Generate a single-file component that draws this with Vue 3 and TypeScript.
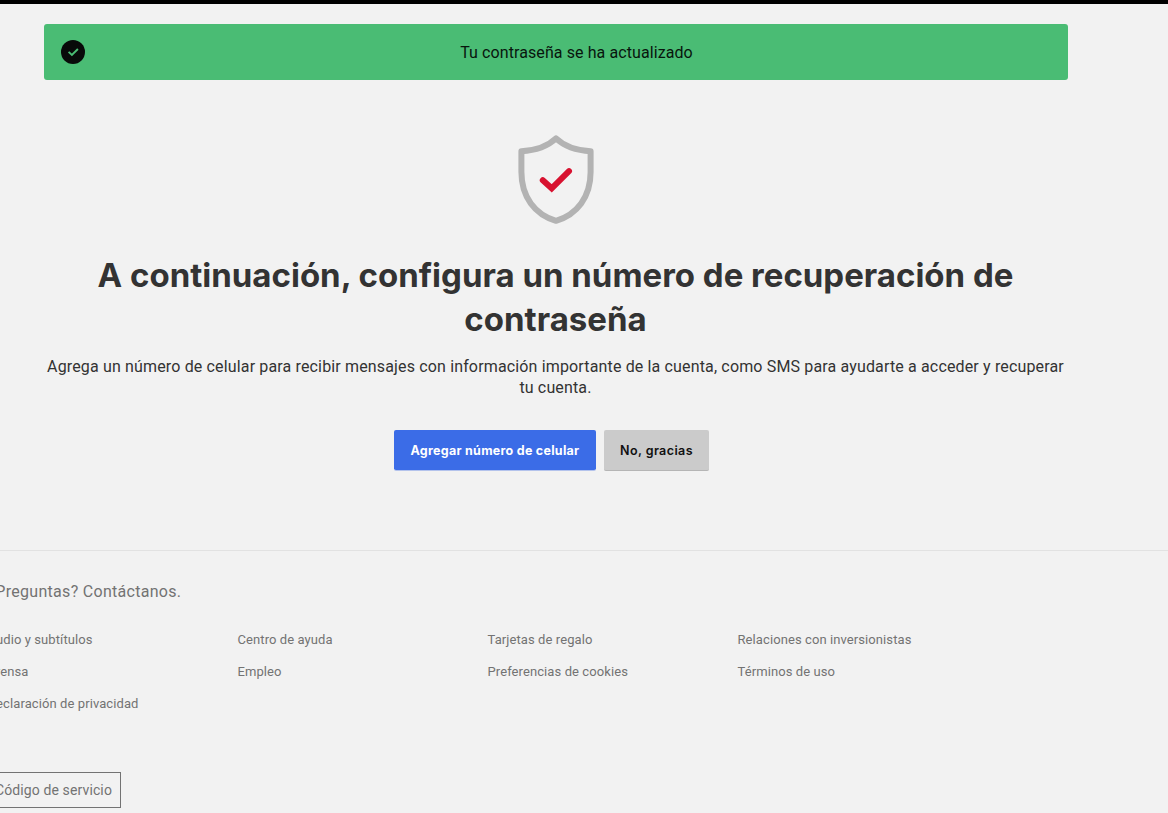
<script setup lang="ts">
interface FooterLink {
  label: string
}

const links: FooterLink[] = [
  { label: 'Audio y subtítulos' },
  { label: 'Centro de ayuda' },
  { label: 'Tarjetas de regalo' },
  { label: 'Relaciones con inversionistas' },
  { label: 'Prensa' },
  { label: 'Empleo' },
  { label: 'Preferencias de cookies' },
  { label: 'Términos de uso' },
  { label: 'Declaración de privacidad' },
]
</script>

<template>
  <div class="page">
    <main class="content">
      <div class="alert" role="status">
        <svg class="alert-icon" viewBox="0 0 24 24" aria-hidden="true">
          <circle cx="12" cy="12" r="12" fill="#080a09" />
          <path d="M7.600 11.900l3.300 3.100 6-6" fill="none" stroke="#4abc74" stroke-width="1.900" />
        </svg>
        <p class="alert-text">Tu contraseña se ha actualizado</p>
      </div>

      <section class="recovery">
        <svg class="shield" viewBox="0 0 76 90" aria-hidden="true">
          <path
            d="M38 3.400C30.500 10.500 18.500 15.500 3.400 16.200V37C3.400 62 17 79.500 38 85.800C59 79.500 72.600 62 72.600 37V16.200C57.500 15.500 45.500 10.500 38 3.400Z"
            fill="none" stroke="#b3b3b3" stroke-width="6" stroke-linejoin="round"
          />
          <path
            d="M24.800 45.200L33.700 53.300L51 36.200"
            fill="none" stroke="#d81230" stroke-width="6" stroke-linecap="round"
          />
        </svg>
        <h1>A continuación, configura un número de recuperación de<br />contraseña</h1>
        <p class="lead">
          Agrega un número de celular para recibir mensajes con información importante de la cuenta, como SMS para ayudarte a acceder y recuperar<br />tu cuenta.
        </p>
        <div class="actions">
          <button class="btn primary" type="button">Agregar número de celular</button>
          <button class="btn secondary" type="button">No, gracias</button>
        </div>
      </section>
    </main>

    <footer class="footer">
      <div class="footer-inner">
        <p class="contact">¿Preguntas? Contáctanos.</p>
        <ul class="links">
          <li v-for="link in links" :key="link.label">{{ link.label }}</li>
        </ul>
        <button class="service" type="button">Código de servicio</button>
      </div>
    </footer>
  </div>
</template>

<style>
body {
  background: #f2f2f2;
  overflow: hidden;
}
</style>

<style scoped>
.page {
  box-sizing: border-box;
  height: 813px;
  overflow: hidden;
  border-top: 4px solid #000;
  background: #f2f2f2;
  color: #333;
  font-family: Roboto, "Liberation Sans", sans-serif;
}
.content {
  box-sizing: border-box;
  width: 1024px;
  height: 546px;
  margin-left: 44px;
  padding-top: 20px;
}
.alert {
  box-sizing: border-box;
  display: flex;
  align-items: center;
  height: 56px;
  padding: 0 16px 0 17px;
  border-radius: 3px;
  background: #4abc74;
  color: #08150d;
}
.alert-icon {
  width: 24px;
  height: 24px;
  flex: none;
}
.alert-text {
  flex: 1;
  margin: 0;
  padding: 2px 0 0 16px;
  text-align: center;
  font-size: 16px;
  line-height: 24px;
  letter-spacing: 0.09px;
}
.recovery {
  display: flex;
  flex-direction: column;
  align-items: center;
  padding: 55px 1px 0 0;
}
.shield {
  width: 76px;
  height: 90px;
}
h1 {
  margin: 28px 0 0;
  font-family: Inter, Roboto, sans-serif;
  font-size: 33px;
  font-weight: 700;
  line-height: 44px;
  text-align: center;
  white-space: nowrap;
}
.lead {
  margin: 15px 0 0;
  font-size: 16px;
  line-height: 21px;
  letter-spacing: 0.15px;
  text-align: center;
  white-space: nowrap;
}
.actions {
  display: flex;
  gap: 8px;
  margin: 32px 8px 0 0;
}
.btn {
  box-sizing: border-box;
  height: 41px;
  padding: 0;
  border: 0;
  border-bottom: 1px solid #b5b5b5;
  border-radius: 2px;
  font-family: Inter, Roboto, sans-serif;
  font-size: 12.5px;
  font-weight: 700;
  letter-spacing: 0.27px;
  white-space: nowrap;
}
.primary {
  width: 202px;
  border-bottom-color: #b4c3ec;
  background: #3b6ce7;
  background-clip: padding-box;
  color: #fff;
}
.secondary {
  width: 105px;
  background: #cbcbcb;
  color: #111;
  font-weight: 600;
  letter-spacing: 0.4px;
}
.footer {
  border-top: 1px solid #e2e2e2;
  color: #737373;
}
.footer-inner {
  width: 1000px;
  margin-left: -12.5px;
  padding-top: 30px;
}
.contact {
  margin: 0;
  font-size: 16px;
  line-height: 21px;
  letter-spacing: 0.29px;
}
.links {
  display: grid;
  grid-template-columns: repeat(4, 250px);
  grid-auto-rows: 32px;
  margin: 22px 0 0;
  padding: 0;
  list-style: none;
  font-size: 13px;
  line-height: 32px;
  letter-spacing: 0.09px;
  white-space: nowrap;
}
.service {
  box-sizing: border-box;
  display: block;
  width: 133.5px;
  height: 36px;
  margin: 52px 0 0;
  padding: 0 8px 0 0;
  border: 1px solid #737373;
  background: transparent;
  color: #737373;
  font-family: inherit;
  font-size: 14px;
  letter-spacing: 0.12px;
  text-align: right;
}
</style>
